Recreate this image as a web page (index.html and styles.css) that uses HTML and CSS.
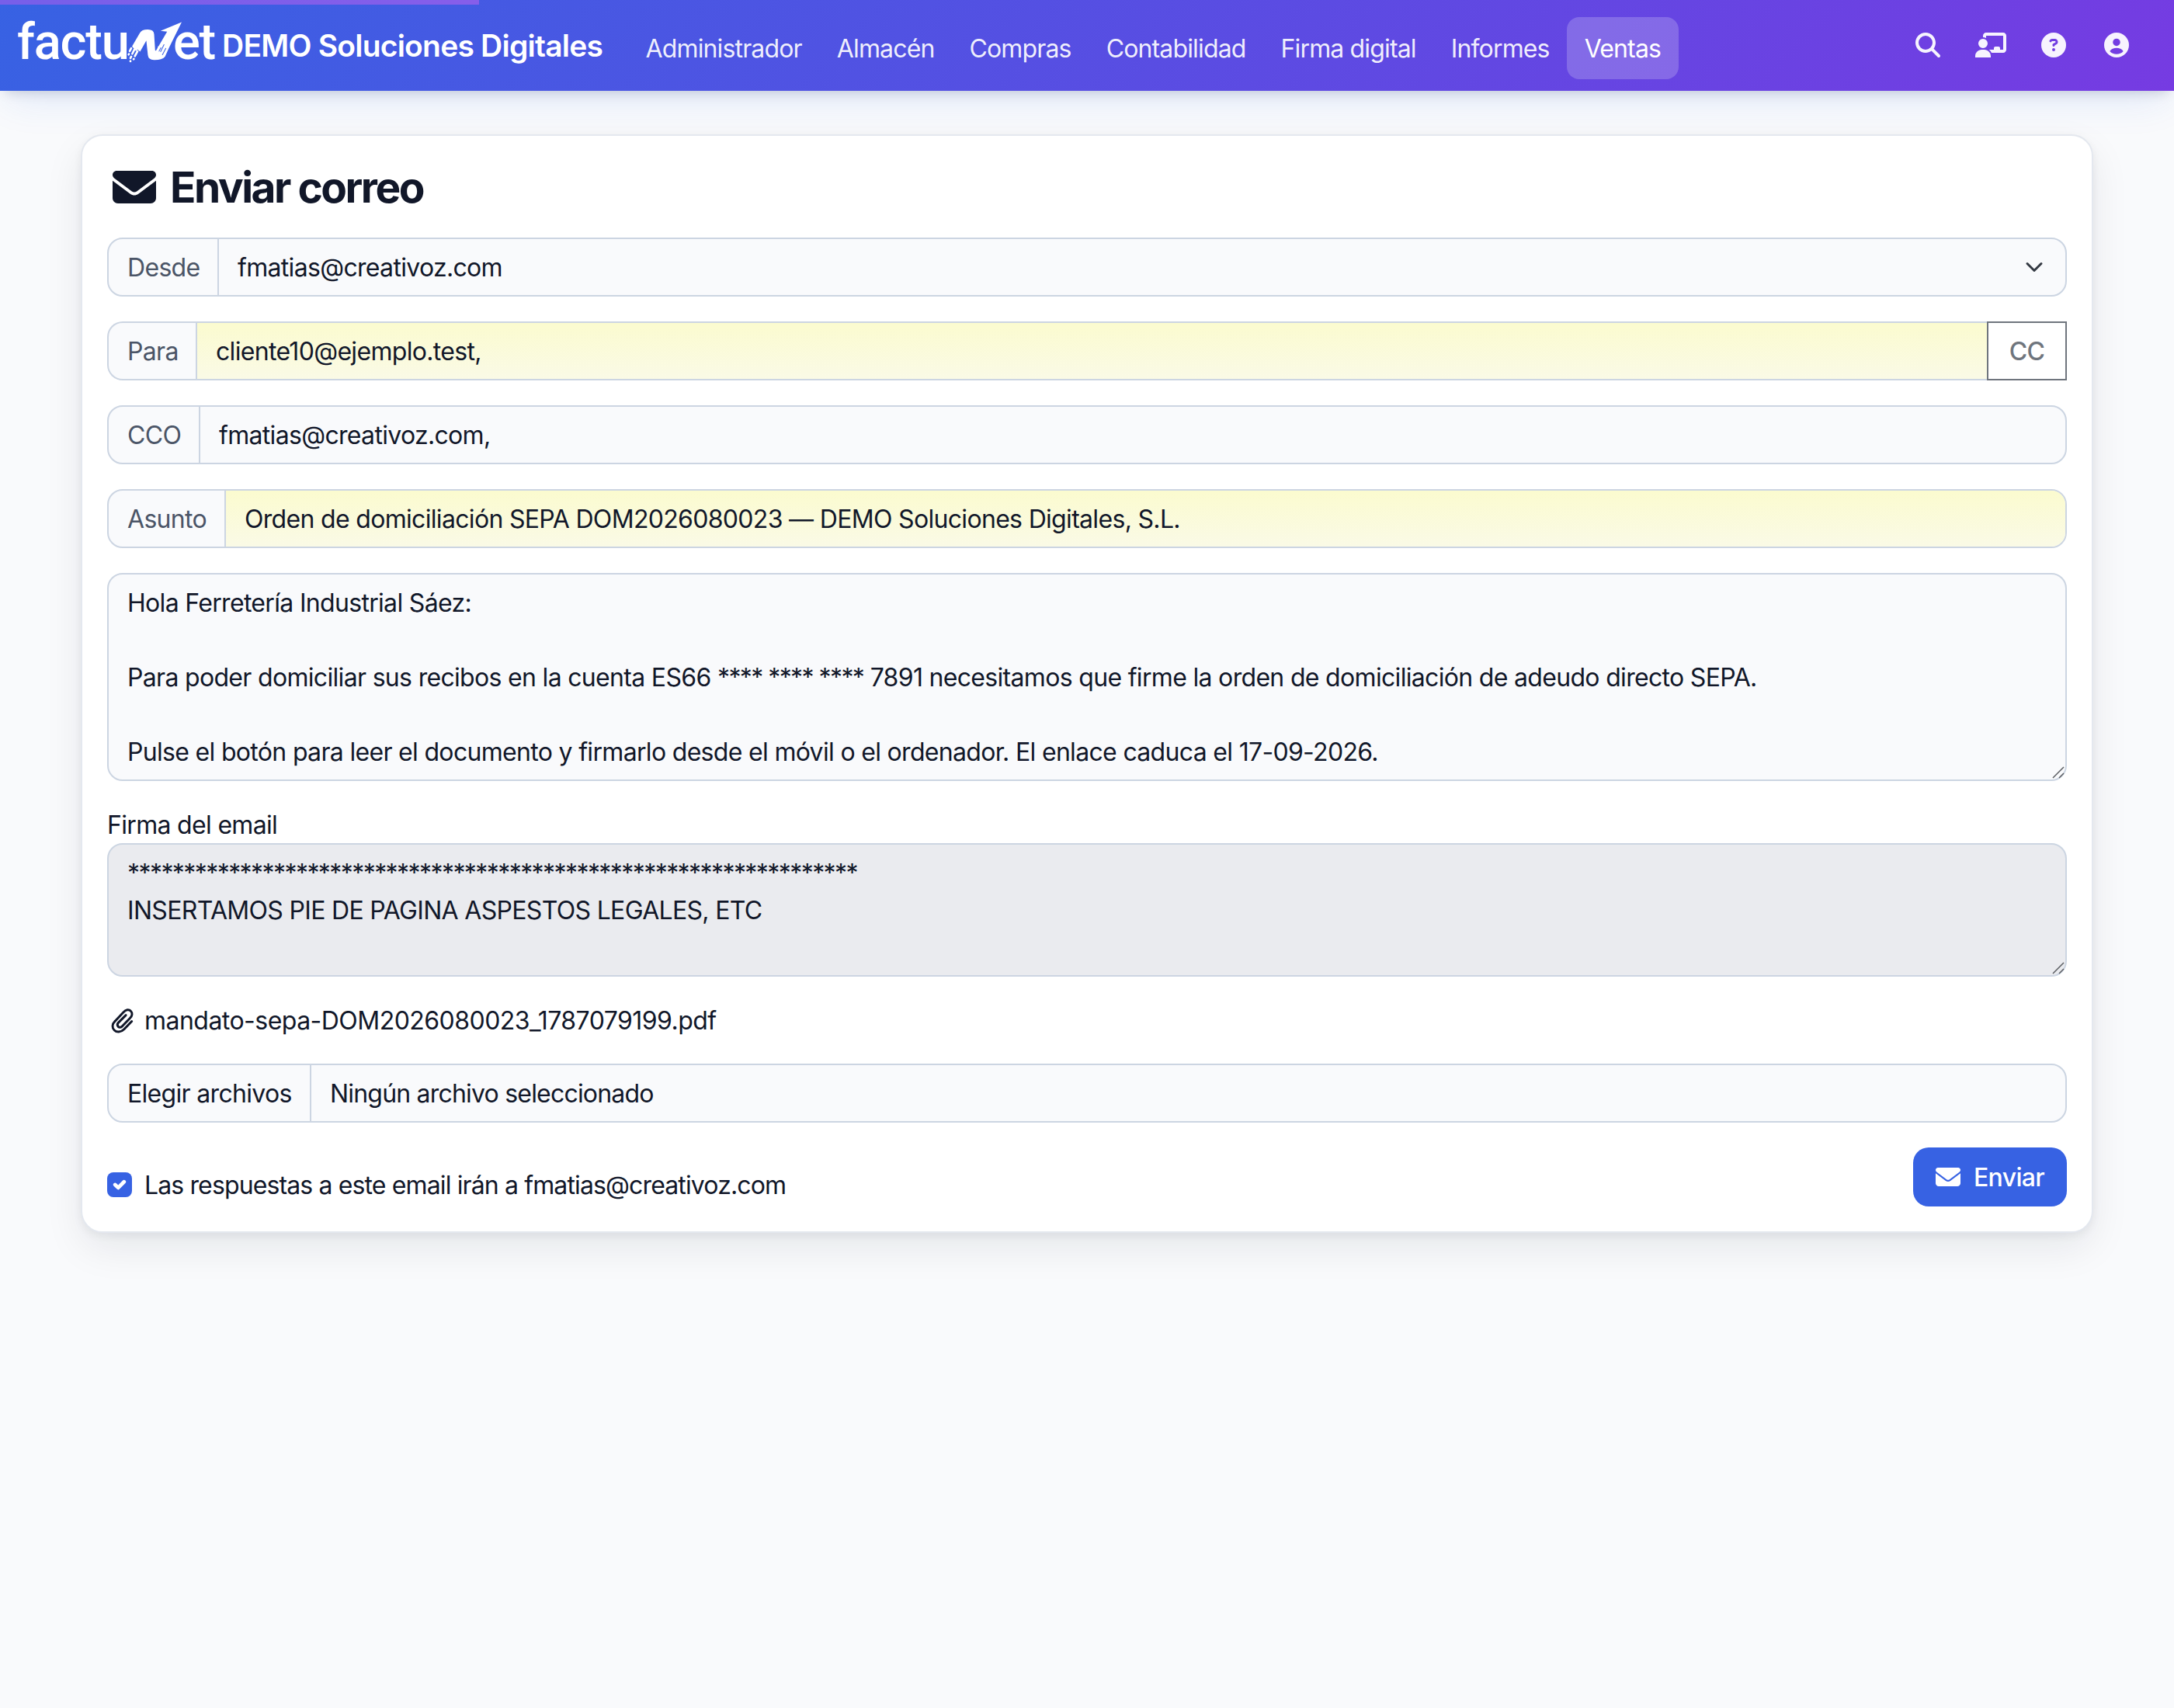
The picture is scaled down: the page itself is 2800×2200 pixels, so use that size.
FILE: index.html
```html
<!DOCTYPE html>
<html lang="es">
<head>
    <meta charset="UTF-8">
    <meta name="viewport" content="width=device-width, initial-scale=1.0">
    <title>Enviar correo</title>
    <link rel="stylesheet" href="styles.css">
</head>
<body>
    <header class="navbar">
        <div class="progress"></div>
        <a class="brand" href="#">
            <span class="logo">
                <span class="logo-text logo-factu">factu</span>
                <svg class="logo-n" viewBox="440 30 230 170" fill="#fff">
                    <path d="M467 131 L497 79 Q505 66 526 66 Q551 65 552 84 L556 146 Q559 150 564 139 L602 74 L577 71 L658 37 L609 137 L594 170 Q581 184 551 183 Q530 182 528 164 L522 108 L498 151 L488 143 L483 149 Z"/>
                    <path d="M567 130 L589 136 L588 174 L560 178 Z"/>
                    <g stroke="#3b60e3" stroke-width="3" stroke-linecap="round">
                        <path d="M578 136 L571 149 M590 124 L577 151 M597 138 L584 163"/>
                    </g>
                    <g stroke="#fff" stroke-width="8" stroke-linecap="round">
                        <path d="M464 138 L458 149 M476 143 L468 159 M488 150 L478 168 M455 160 L454 162 M464 170 L461 176 M461 187 L461 188 M474 179 L473 180"/>
                    </g>
                </svg>
                <span class="logo-text logo-et">et</span>
            </span>
            <span class="brand-name">DEMO Soluciones Digitales</span>
        </a>
        <nav class="menu">
            <a class="menu-link" href="#">Administrador</a>
            <a class="menu-link" href="#">Almacén</a>
            <a class="menu-link" href="#">Compras</a>
            <a class="menu-link" href="#">Contabilidad</a>
            <a class="menu-link" href="#">Firma digital</a>
            <a class="menu-link" href="#">Informes</a>
            <a class="menu-link active" href="#">Ventas</a>
        </nav>
        <div class="tools">
            <a class="tool" href="#"><svg viewBox="0 0 512 512"><path d="M416 208c0 45.9-14.9 88.3-40 122.7L502.6 457.4c12.5 12.5 12.5 32.8 0 45.3s-32.8 12.5-45.3 0L330.7 376c-34.4 25.2-76.8 40-122.7 40C93.1 416 0 322.9 0 208S93.1 0 208 0S416 93.1 416 208zM208 352a144 144 0 1 0 0-288 144 144 0 1 0 0 288z"/></svg></a>
            <a class="tool" href="#"><svg viewBox="0 0 640 512"><path d="M160 64c0-35.3 28.7-64 64-64H576c35.3 0 64 28.7 64 64V352c0 35.3-28.7 64-64 64H336.8c-11.8-25.5-29.9-47.5-52.4-64H384V320c0-17.7 14.3-32 32-32h64c17.7 0 32 14.3 32 32v32h64V64L224 64v49.1C205.2 102.2 183.3 96 160 96V64zm0 64a96 96 0 1 1 0 192 96 96 0 1 1 0-192zM133.3 352h53.3C260.3 352 320 411.7 320 485.3V512H0V485.3C0 411.7 59.7 352 133.3 352z"/></svg></a>
            <a class="tool" href="#"><svg viewBox="0 0 512 512"><path d="M256 512A256 256 0 1 0 256 0a256 256 0 1 0 0 512zM169.8 165.3c7.9-22.3 29.1-37.3 52.8-37.3h58.3c34.9 0 63.1 28.3 63.1 63.1c0 22.6-12.1 43.5-31.7 54.8L280 264.4c-.2 13-10.9 23.6-24 23.6c-13.3 0-24-10.7-24-24V250.5c0-8.6 4.6-16.5 12.1-20.8l44.3-25.4c4.7-2.7 7.6-7.7 7.6-13.1c0-8.4-6.8-15.1-15.1-15.1H222.6c-3.4 0-6.4 2.1-7.5 5.3l-.4 1.2c-4.4 12.5-18.2 19-30.6 14.6s-19-18.2-14.6-30.6l.4-1.2zM224 352a32 32 0 1 1 64 0 32 32 0 1 1 -64 0z"/></svg></a>
            <a class="tool" href="#"><svg viewBox="0 0 512 512"><path fill-rule="evenodd" d="M256 0a256 256 0 1 0 0 512a256 256 0 1 0 0-512zM256 122a76 76 0 1 1 0 152a76 76 0 1 1 0-152zM117 384C146 335 200 315 256 315S366 335 395 384C362 426 310 443 256 443S150 426 117 384z"/></svg></a>
        </div>
    </header>

    <main class="page">
        <form class="card">
            <h1 class="title">
                <svg class="title-icon" viewBox="0 64 512 384"><path d="M48 64c-26.5 0-48 21.5-48 48 0 15.1 7.1 29.3 19.2 38.4l208 156c17.1 12.8 40.5 12.8 57.6 0l208-156c12.1-9.1 19.2-23.3 19.2-38.4 0-26.5-21.5-48-48-48L48 64zM0 180L0 384c0 35.3 28.7 64 64 64l384 0c35.3 0 64-28.7 64-64l0-204-208 156c-28.4 21.3-67.6 21.3-96 0L0 180z"/></svg>
                <span>Enviar correo</span>
            </h1>

            <div class="group">
                <span class="addon addon-from">Desde</span>
                <div class="select">
                    <span>fmatias@creativoz.com</span>
                    <svg class="chevron" viewBox="0 0 16 16"><path d="m2 5 6 6 6-6"/></svg>
                </div>
            </div>

            <div class="group group-cc">
                <label class="addon addon-to" for="para">Para</label>
                <input class="control required" id="para" type="text" value="cliente10@ejemplo.test,">
                <button class="btn-cc" type="button">CC</button>
            </div>

            <div class="group">
                <label class="addon addon-bcc" for="cco">CCO</label>
                <input class="control" id="cco" type="text" value="fmatias@creativoz.com,">
            </div>

            <div class="group">
                <label class="addon addon-subject" for="asunto">Asunto</label>
                <input class="control required" id="asunto" type="text" value="Orden de domiciliación SEPA DOM2026080023 — DEMO Soluciones Digitales, S.L.">
            </div>

            <div class="area area-message">
                <p>Hola Ferretería Industrial Sáez:</p>
                <p>Para poder domiciliar sus recibos en la cuenta ES66 <span class="stars">**** **** ****</span> 7891 necesitamos que firme la orden de domiciliación de adeudo directo SEPA.</p>
                <p>Pulse el botón para leer el documento y firmarlo desde el móvil o el ordenador. El enlace caduca el 17-09-2026.</p>
                <svg class="grip" viewBox="0 0 16 16"><path d="M1 15 15 1M9 15l6-6"/></svg>
            </div>

            <div class="signature">
                <div class="label">Firma del email</div>
                <div class="area area-signature">
                    <p class="stars">*****************************************************************</p>
                    <p>INSERTAMOS PIE DE PAGINA ASPESTOS LEGALES, ETC</p>
                    <svg class="grip" viewBox="0 0 16 16"><path d="M1 15 15 1M9 15l6-6"/></svg>
                </div>
            </div>

            <div class="attachment">
                <svg class="clip" viewBox="40 53 88 98"><path d="M121 105 L91 136 C78 149 62 149 53 140 C44 131 43 117 56 104 L88 70 C98 59 110 57 117 65 C125 73 123 84 114 93 L84 124 C79 130 72 130 68 126 C64 121 64 115 69 110 L98 81"/></svg>
                <span class="attachment-name">mandato-sepa-DOM2026080023_1787079199.pdf</span>
            </div>

            <div class="group">
                <span class="addon addon-file">Elegir archivos</span>
                <span class="file-name">Ningún archivo seleccionado</span>
            </div>

            <div class="footer">
                <label class="check">
                    <span class="checkbox">
                        <svg viewBox="0 0 20 20"><path d="M6.4 10l2.5 2.4 4.7-4.7"/></svg>
                    </span>
                    <span class="check-text">Las respuestas a este email irán a fmatias@creativoz.com</span>
                </label>
                <button class="btn-send" type="button">
                    <svg class="send-icon" viewBox="0 64 512 384"><path d="M48 64c-26.5 0-48 21.5-48 48 0 15.1 7.1 29.3 19.2 38.4l208 156c17.1 12.8 40.5 12.8 57.6 0l208-156c12.1-9.1 19.2-23.3 19.2-38.4 0-26.5-21.5-48-48-48L48 64zM0 180L0 384c0 35.3 28.7 64 64 64l384 0c35.3 0 64-28.7 64-64l0-204-208 156c-28.4 21.3-67.6 21.3-96 0L0 180z"/></svg>
                    <span class="send-text">Enviar</span>
                </button>
            </div>
        </form>
    </main>
</body>
</html>
```
FILE: styles.css
```css
* {
    margin: 0;
    padding: 0;
    box-sizing: border-box;
}
body {
    background: #f9fafc;
    color: #111729;
    font-family: Inter, "Liberation Sans", sans-serif;
    font-size: 32px;
    line-height: 48px;
    letter-spacing: -0.68px;
    min-height: 100vh;
}
a {
    color: inherit;
    text-decoration: none;
}
input, button {
    font: inherit;
    color: inherit;
    letter-spacing: inherit;
    outline: none;
}

/* Navbar */
.navbar {
    position: relative;
    display: flex;
    align-items: center;
    height: 117px;
    padding: 0 34px 0 22px;
    background: linear-gradient(135deg, #3762e3 0%, #763be2 100%);
    box-shadow: 0 20px 50px -10px rgba(37, 99, 235, 0.13), 0 8px 16px -8px rgba(15, 23, 42, 0.22);
}
.progress {
    position: absolute;
    top: 0;
    left: 0;
    width: 617px;
    height: 6px;
    background: linear-gradient(90deg, #775fe9, #865eea);
}
.brand {
    display: flex;
    align-items: center;
    width: 787px;
    color: #fff;
}
.logo {
    display: flex;
    align-items: center;
    width: 264px;
    height: 80px;
    margin-top: -9px;
}
.logo-text {
    font-family: Roboto, sans-serif;
    font-size: 65px;
    font-weight: 500;
    letter-spacing: -1.2px;
    line-height: 80px;
}
.logo-factu {
    width: 139px;
}
.logo-n {
    width: 77px;
    height: 57px;
    margin-right: -15px;
}
.brand-name {
    font-size: 39px;
    font-weight: 600;
    letter-spacing: -0.78px;
    white-space: nowrap;
}
.menu {
    display: flex;
    margin-top: 7px;
    letter-spacing: -0.85px;
}
.menu-link {
    padding: 17px 22.5px 15px;
    border-radius: 16px;
    color: rgba(255, 255, 255, 0.92);
}
.menu-link.active {
    background: rgba(255, 255, 255, 0.2);
    color: #fff;
}
.tools {
    display: flex;
    margin-top: -1px;
    margin-left: auto;
}
.tool {
    display: flex;
    justify-content: center;
    width: 81px;
}
.tool svg {
    height: 32px;
    fill: rgba(255, 255, 255, 0.94);
}

/* Card */
.page {
    padding: 56px 104px;
}
.card {
    display: flex;
    flex-direction: column;
    gap: 32px;
    padding: 32px;
    background: #fff;
    border: 2px solid #e4e8ef;
    border-radius: 28px;
    box-shadow: 0 20px 50px rgba(15, 23, 42, 0.08), 0 4px 12px rgba(15, 23, 42, 0.06);
}
.title {
    display: flex;
    align-items: center;
    gap: 18px;
    height: 67px;
    padding-left: 7px;
    font-size: 55px;
    font-weight: 700;
    letter-spacing: -2.5px;
    line-height: 67px;
}
.title span {
    padding-top: 2px;
}
.title-icon {
    width: 56px;
    height: 42px;
    fill: #111729;
}

/* Fields */
.group {
    display: flex;
    height: 76px;
    border: 2px solid #ccd5e2;
    border-radius: 20px;
    background: #f9fafc;
    overflow: hidden;
}
.group-cc {
    border-right: none;
    border-top-right-radius: 0;
    border-bottom-right-radius: 0;
    overflow: visible;
}
.addon {
    flex: none;
    padding: 13px 0 11px 24px;
    border-right: 2px solid #ccd5e2;
    color: #4b5567;
    white-space: nowrap;
}
.addon-from {
    width: 142px;
}
.addon-to {
    width: 114px;
}
.addon-bcc {
    width: 118px;
}
.addon-subject {
    width: 151px;
}
.addon-file {
    width: 261px;
    color: #111729;
}
.control {
    flex: 1;
    min-width: 0;
    padding: 13px 24px 11px;
    border: none;
    background: transparent;
}
.required {
    background: linear-gradient(#fbfbcf, #fafae6);
}
.select {
    display: flex;
    flex: 1;
    justify-content: space-between;
    align-items: center;
    padding: 0 28px 0 24px;
}
.select span {
    padding-top: 2px;
}
.chevron {
    width: 24px;
    height: 24px;
    fill: none;
    stroke: #343a43;
    stroke-width: 2;
    stroke-linecap: round;
    stroke-linejoin: round;
}
.btn-cc {
    width: 103px;
    margin: -2px 0;
    padding-top: 2px;
    border: 2px solid #6f757d;
    background: #fff;
    color: #6f757d;
    font-weight: 500;
}
.area {
    position: relative;
    padding: 13px 24px 11px;
    border: 2px solid #ccd5e2;
    border-radius: 20px;
}
.area-message {
    display: flex;
    flex-direction: column;
    gap: 48px;
    height: 268px;
    background: #f9fafc;
}
.area-signature {
    height: 172px;
    background: #eaebef;
}
.stars {
    letter-spacing: -1.57px;
}
.grip {
    position: absolute;
    right: 1px;
    bottom: 1px;
    width: 16px;
    height: 16px;
    fill: none;
    stroke: #5c5f63;
    stroke-width: 1.5;
}
.label {
    height: 48px;
    padding-top: 1px;
}
.attachment {
    display: flex;
    align-items: center;
    gap: 14px;
    height: 48px;
    padding-left: 5px;
    letter-spacing: -0.53px;
}
.attachment-name {
    padding-top: 2px;
}
.clip {
    width: 29px;
    height: 33px;
    fill: none;
    stroke: #111729;
    stroke-width: 9;
    stroke-linecap: round;
}
.file-name {
    padding: 13px 24px 11px;
    letter-spacing: -0.8px;
}

/* Footer */
.footer {
    display: flex;
    justify-content: space-between;
    height: 76px;
}
.check {
    display: flex;
    align-items: center;
    gap: 16px;
    height: 48px;
    margin-top: 24px;
}
.check-text {
    padding-top: 2px;
    letter-spacing: -0.87px;
}
.checkbox {
    width: 32px;
    height: 32px;
    border-radius: 8px;
    background: #3762e3;
}
.checkbox svg {
    display: block;
    fill: none;
    stroke: #fff;
    stroke-width: 3;
    stroke-linecap: round;
    stroke-linejoin: round;
}
.btn-send {
    display: flex;
    align-items: center;
    gap: 17px;
    width: 198px;
    padding-left: 29px;
    border: none;
    border-radius: 20px;
    background: #3762e3;
    color: #fff;
    font-weight: 500;
}
.send-icon {
    width: 32px;
    height: 24px;
    fill: #fff;
}
.send-text {
    padding-top: 2px;
}
```
